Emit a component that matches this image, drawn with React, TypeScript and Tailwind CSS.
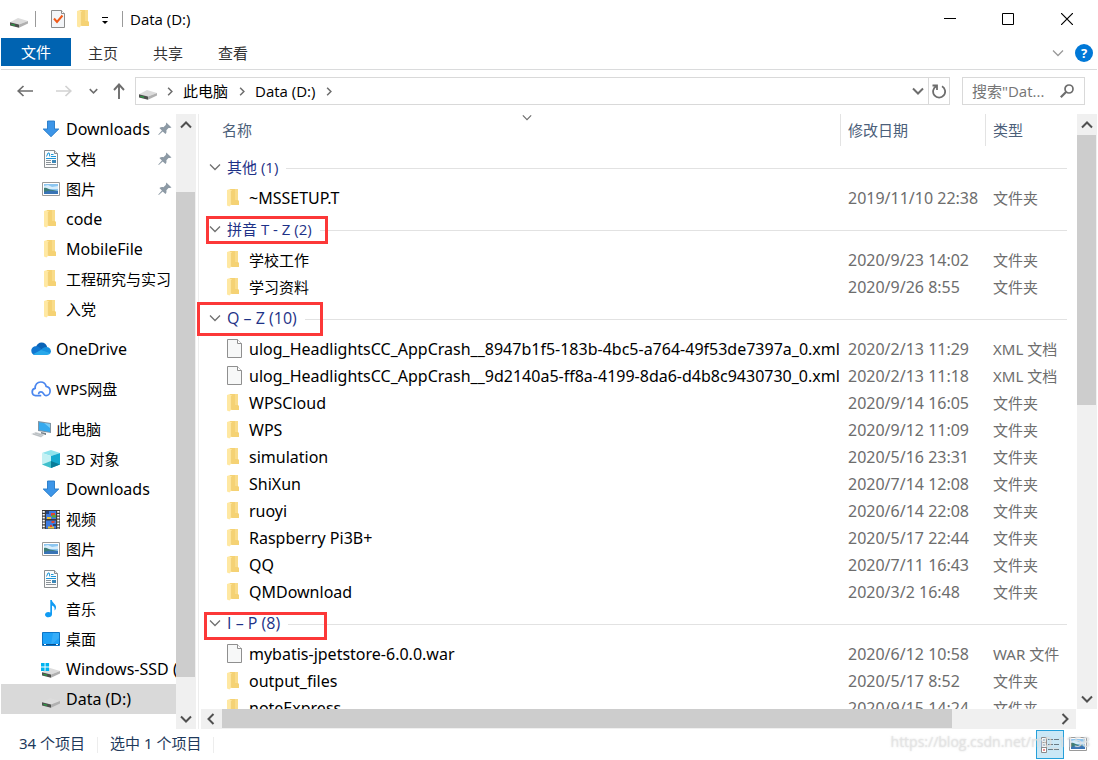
import React from "react";

type IconProps = { className?: string };

function Folder({ className = "" }: IconProps) {
  return (
    <svg viewBox="0 0 12 18" className={`h-[18px] w-3 shrink-0 ${className}`} aria-hidden="true">
      <path d="M3 0h8v11l1 1v4H3z" fill="#f5d274" />
      <path d="M8 0h3v11H8z" fill="#f9dc8a" />
      <path d="M0 1l3-1v.6l2 1.2V15l-2.6 2.6L0 16.5z" fill="#ffe8a2" />
      <path d="M4.4 2v13.3" stroke="#efc968" strokeWidth=".8" fill="none" />
    </svg>
  );
}

function FileIcon() {
  return (
    <svg viewBox="0 0 15 19" className="h-[19px] w-[15px] shrink-0" aria-hidden="true">
      <path d="M.5.5h10l4 4v14H.5z" fill="#f7f8f8" stroke="#8f8f8f" />
      <path d="M10.5.5v4h4" fill="#fff" stroke="#8f8f8f" />
    </svg>
  );
}

function Drive({ windows = false }: { windows?: boolean }) {
  return (
    <svg viewBox="0 0 20 18" className="h-[18px] w-5 shrink-0" aria-hidden="true">
      <path d="M1 12.200L9 8l10 3-9 3.400z" fill="#dcdcdc" />
      <path d="M1 12.200l9 2.200v3.300l-9-2.300z" fill="#4d504d" />
      <path d="M10 14.400L19 11v2.600l-9 4.100z" fill="#b0b0b0" />
      <path d="M2.500 13.900l3.500.9v1l-3.500-.9z" fill="#1fb541" />
      {windows && (
        <path d="M0 3h3.600v3.600H0zM4.500 3h3.600v3.600H4.500zM0 7.500h3.600v3.600H0zM4.500 7.500h3.600v3.600H4.500z" fill="#00b4f0" />
      )}
    </svg>
  );
}

function DownArrow() {
  return (
    <svg viewBox="0 0 18 18" className="h-[18px] w-[18px]" aria-hidden="true">
      <path d="M5.500 1h7v8h4.300L9 16.700 1.200 9h4.300z" fill="#3c95e8" stroke="#2478c6" strokeWidth=".9" />
    </svg>
  );
}

function DocIcon() {
  return (
    <svg viewBox="0 0 18 18" className="h-[18px] w-[18px]" aria-hidden="true">
      <path d="M2.500.5h10l3 3v14h-13z" fill="#fcfcfc" stroke="#8b8f92" />
      <path d="M12.500.5v3h3" fill="#e6e6e6" stroke="#8b8f92" />
      <path d="M4.500 6.500l1.500-3.500h1.200l.6 3.500M9 4.500h2.500M9 6.500h5M4 8.500h10" stroke="#1f96d8" fill="none" />
      <path d="M4 10.500h5M4 12.500h5M4 14.500h10" stroke="#8a9298" fill="none" />
      <path d="M10 10h4v3h-4z" fill="#3b87b8" />
    </svg>
  );
}

function PictureIcon() {
  return (
    <svg viewBox="0 0 18 18" className="h-[18px] w-[18px]" aria-hidden="true">
      <path d="M.5 2.500h17v13H.5z" fill="#fff" stroke="#9a9a9a" />
      <path d="M2 4h14v10H2z" fill="#8cc6f1" />
      <path d="M2 6l4-1 4 2 6-1v3H2z" fill="#d7edfb" />
      <path d="M2 8c2-1 4 .5 6 1.500l8 1.500v3H2z" fill="#3e7d77" />
      <path d="M2 12c5-2 9-1 14-1v3H2z" fill="#3873b5" />
    </svg>
  );
}

function Cube() {
  return (
    <svg viewBox="0 0 18 18" className="h-[18px] w-[18px]" aria-hidden="true">
      <path d="M9 0l9 3-9 3-9-3z" fill="#8fe3ec" />
      <path d="M0 3l9 3v12l-9-3.500z" fill="#c3f1f4" />
      <path d="M0 14.500L9 11v7z" fill="#3fbfcb" />
      <path d="M18 3L9 6v12l9-3.500z" fill="#14a9cf" />
      <path d="M9 11l9 3.500L9 18z" fill="#087c98" />
    </svg>
  );
}

function Film() {
  return (
    <svg viewBox="0 0 18 19" className="h-[19px] w-[18px]" aria-hidden="true">
      <path d="M0 0h18v19H0z" fill="#3b3b3b" />
      <path d="M1.700 1v18M16.300 1v18" stroke="#fff" strokeWidth="2.200" strokeDasharray="1.700 1.200" />
      <path d="M4 1h10v8H4zM4 10.500h10v8H4z" fill="#3d7be0" />
      <path d="M9 3h4v3H9zM9.500 11h3v2h-3z" fill="#e1452f" />
      <path d="M10 5h4v2.500h-4z" fill="#57a83a" />
      <path d="M5 7h4v2H5zM6 16.500h6v2H6z" fill="#efc12e" />
      <path d="M8 15h2v2H8z" fill="#e1452f" />
      <path d="M4 1h3v3H4zM11 14h3v2h-3z" fill="#24437e" />
    </svg>
  );
}

function Music() {
  return (
    <svg viewBox="0 0 18 18" className="h-[18px] w-[18px]" aria-hidden="true">
      <path d="M8.300 0h1.500c.3 3 4.700 4.200 4.200 7.800-.1 1.200-.8 2.200-1.500 2.800.6-2.600-.4-4.200-2.500-5v8.700c0 1.800-1.500 3-3.500 3S3 16.200 3 14.700s1.500-2.700 3.300-2.700c.8 0 1.500.2 2 .5z" fill="#109bf3" />
    </svg>
  );
}

function Desktop() {
  return (
    <svg viewBox="0 0 18 18" className="h-[18px] w-[18px]" aria-hidden="true">
      <path d="M.5 2.500h17v13H.5z" fill="#1fa2f7" stroke="#0d75c7" />
      <path d="M11 3h6v5L9 15z" fill="#46b4fa" opacity=".6" />
      <path d="M1 14.500h16" stroke="#0b4f8c" />
      <path d="M2 14.500h2M14 14.500h2" stroke="#fff" />
    </svg>
  );
}

function OneDrive() {
  return (
    <svg viewBox="0 0 20 14" className="h-[14px] w-5" aria-hidden="true">
      <path d="M5 5C6 2 8 .5 10.500.5c3 0 5 1.800 5.700 4.500L12 9z" fill="#0a63b7" />
      <path d="M4.500 13A4.300 4.300 0 0 1 .3 8.800C.3 6.400 2.300 4.300 5 4.300c1.500 0 2.700.5 3.500 1.200l5 4L7 13z" fill="#1076d0" />
      <path d="M9 8.500c2-2 4-3.700 7-3.500 2.500.2 3.900 2.200 3.900 4.200 0 1-.3 1.800-.9 2.500z" fill="#1590df" />
      <path d="M2 12.200l8-4.300 9.300 3.400c-.6 1.100-1.800 1.700-3.300 1.700H4.500c-1 0-1.900-.3-2.500-.8z" fill="#28a8ea" />
    </svg>
  );
}

function WpsCloud() {
  return (
    <svg viewBox="0 0 20 16" className="h-4 w-5" fill="none" stroke="#4a86ee" strokeWidth="1.700" strokeLinecap="round" aria-hidden="true">
      <path d="M9.500 14.700H4.600a3.700 3.700 0 0 1-.5-7.300C4 3.700 6.300 1 9.700 1c2.800 0 4.800 1.700 5.400 4.300 2.500.4 4 2.200 4 4.700s-1.800 4.700-4.100 4.700c-1.500 0-2-.9-2.500-2-.5-1-1.200-1.900-2.600-1.900-1.200 0-2 .7-2.200 1.700" />
    </svg>
  );
}

function Computer() {
  return (
    <svg viewBox="0 0 20 18" className="h-[18px] w-5" aria-hidden="true">
      <path d="M7 1l13 2v10L7 11z" fill="#8194a3" />
      <path d="M8 2.200l11 1.700v8L8 10z" fill="#35a9ee" />
      <path d="M13 3l6 .9v4z" fill="#7accf6" />
      <path d="M10 12l5 1v2l-5-.5z" fill="#77838c" />
      <path d="M0 14l5-2 9 2.500-4 3z" fill="#d3d7da" />
      <path d="M2 14l8.500 2.500M4 13l8 2.300" stroke="#a4a9ad" strokeWidth=".6" />
    </svg>
  );
}

function Pin() {
  return (
    <svg viewBox="0 0 14 14" className="h-[14px] w-[14px]" fill="#8d9aa5" aria-hidden="true">
      <path d="M8.300.5l5.200 5-1.700.6-1.300-.2-2.100 2.300c.3 1.500 0 2.900-.9 3.900L4.700 9.400.8 13l-.5-.4 3.600-4.200-2.500-2.500c1.200-.8 2.500-1 4-.7l2.400-2.200z" />
    </svg>
  );
}

function Chevron({ dir, className = "", w = 2 }: { dir: "up" | "down" | "left" | "right"; className?: string; w?: number }) {
  const paths = { up: "M1 6.500l5-5 5 5", down: "M1 1.500l5 5 5-5", left: "M6.500 1l-5 5 5 5", right: "M1.500 1l5 5-5 5" };
  const vertical = dir === "up" || dir === "down";
  return (
    <svg viewBox={vertical ? "0 0 12 8" : "0 0 8 12"} className={`shrink-0 ${className}`} fill="none" stroke="currentColor" strokeWidth={w} aria-hidden="true">
      <path d={paths[dir]} />
    </svg>
  );
}

/* Latin labels are set one step larger than Chinese ones. */
const labelSize = (text: string) => (/[\u4e00-\u9fff]/.test(text) ? "text-[15px]" : "text-[16px]");

type NavItem = { label: string; icon: React.ReactNode; root?: boolean; pinned?: boolean; gap?: boolean; selected?: boolean };

const nav: NavItem[] = [
  { label: "Downloads", icon: <DownArrow />, pinned: true },
  { label: "文档", icon: <DocIcon />, pinned: true },
  { label: "图片", icon: <PictureIcon />, pinned: true },
  { label: "code", icon: <Folder className="mr-0.5" /> },
  { label: "MobileFile", icon: <Folder className="mr-0.5" /> },
  { label: "工程研究与实习", icon: <Folder className="mr-0.5" /> },
  { label: "入党", icon: <Folder className="mr-0.5" /> },
  { label: "OneDrive", icon: <OneDrive />, root: true, gap: true },
  { label: "WPS网盘", icon: <WpsCloud />, root: true, gap: true },
  { label: "此电脑", icon: <Computer />, root: true, gap: true },
  { label: "3D 对象", icon: <Cube /> },
  { label: "Downloads", icon: <DownArrow /> },
  { label: "视频", icon: <Film /> },
  { label: "图片", icon: <PictureIcon /> },
  { label: "文档", icon: <DocIcon /> },
  { label: "音乐", icon: <Music /> },
  { label: "桌面", icon: <Desktop /> },
  { label: "Windows-SSD (C:)", icon: <Drive windows /> },
  { label: "Data (D:)", icon: <Drive />, selected: true },
];

type Row = [name: string, date: string, type: string];

const groups: { title: string; mark?: string; rows: Row[] }[] = [
  { title: "其他 (1)", rows: [["~MSSETUP.T", "2019/11/10 22:38", "文件夹"]] },
  {
    title: "拼音 T - Z (2)",
    mark: "left-[7px] top-[5px] h-7 w-[122px]",
    rows: [
      ["学校工作", "2020/9/23 14:02", "文件夹"],
      ["学习资料", "2020/9/26 8:55", "文件夹"],
    ],
  },
  {
    title: "Q – Z (10)",
    mark: "-left-0.5 top-0.5 h-[34px] w-[126px]",
    rows: [
      ["ulog_HeadlightsCC_AppCrash__8947b1f5-183b-4bc5-a764-49f53de7397a_0.xml", "2020/2/13 11:29", "XML 文档"],
      ["ulog_HeadlightsCC_AppCrash__9d2140a5-ff8a-4199-8da6-d4b8c9430730_0.xml", "2020/2/13 11:18", "XML 文档"],
      ["WPSCloud", "2020/9/14 16:05", "文件夹"],
      ["WPS", "2020/9/12 11:09", "文件夹"],
      ["simulation", "2020/5/16 23:31", "文件夹"],
      ["ShiXun", "2020/7/14 12:08", "文件夹"],
      ["ruoyi", "2020/6/14 22:08", "文件夹"],
      ["Raspberry Pi3B+", "2020/5/17 22:44", "文件夹"],
      ["QQ", "2020/7/11 16:43", "文件夹"],
      ["QMDownload", "2020/3/2 16:48", "文件夹"],
    ],
  },
  {
    title: "I – P (8)",
    mark: "left-[5px] top-[7px] h-7 w-[123px]",
    rows: [
      ["mybatis-jpetstore-6.0.0.war", "2020/6/12 10:58", "WAR 文件"],
      ["output_files", "2020/5/17 8:52", "文件夹"],
      ["noteExpress", "2020/9/15 14:24", "文件夹"],
    ],
  },
];

function VScroll({ before, thumb, after }: { before: number; thumb: number; after: number }) {
  return (
    <div className="flex w-5 shrink-0 flex-col bg-[#f0f0f0] text-[#505050]">
      <button aria-label="向上滚动" className="grid h-[21px] w-full shrink-0 place-items-center">
        <Chevron dir="up" className="h-2 w-3" />
      </button>
      <div style={{ flexGrow: before }} />
      <div className="mr-px bg-[#cdcdcd]" style={{ flexGrow: thumb }} />
      <div style={{ flexGrow: after }} />
      <button aria-label="向下滚动" className="grid h-[21px] w-full shrink-0 place-items-center">
        <Chevron dir="down" className="h-2 w-3" />
      </button>
    </div>
  );
}

export default function App() {
  return (
    <div className="flex h-screen w-full flex-col overflow-hidden bg-white px-px font-['Noto_Sans','Noto_Sans_CJK_SC',sans-serif] text-[15px] leading-5 text-black">
      <header className="shrink-0">
        <div className="flex h-[38px] items-center">
          <div className="flex flex-1 items-center pl-2">
            <Drive />
            <span className="ml-[6px] h-4 w-px bg-[#9a9a9a]" />
            <button aria-label="属性" className="ml-[15px]">
              <svg viewBox="0 0 14 18" className="h-[18px] w-[14px]" aria-hidden="true">
                <path d="M.5.5h10l3 3v14H.5z" fill="#f3f5f8" stroke="#8c8c8c" />
                <path d="M10.500.5v3h3" fill="#fff" stroke="#8c8c8c" />
                <path d="M3 8.500l3 3.500 5.500-6.500" fill="none" stroke="#f05a1a" strokeWidth="2" />
              </svg>
            </button>
            <button aria-label="新建文件夹" className="ml-3">
              <Folder />
            </button>
            <button aria-label="自定义快速访问工具栏" className="ml-3 mt-1">
              <svg viewBox="0 0 8 8" className="h-2 w-2" aria-hidden="true">
                <path d="M1 .5h6" stroke="#000" />
                <path d="M1 4h6L4 7z" />
              </svg>
            </button>
            <span className="ml-[13px] h-4 w-px bg-[#9a9a9a]" />
            <h1 className="ml-[7px] font-['Open_Sans','Noto_Sans_CJK_SC',sans-serif] text-[15px]">Data (D:)</h1>
          </div>
          <button aria-label="最小化" className="grid h-full w-[58px] place-items-center">
            <svg viewBox="0 0 12 12" className="h-3 w-3" stroke="#000"><path d="M0 5.500h12" /></svg>
          </button>
          <button aria-label="最大化" className="grid h-full w-[58px] place-items-center">
            <svg viewBox="0 0 12 12" className="h-3 w-3" fill="none" stroke="#000"><path d="M.5.5h11v11H.5z" /></svg>
          </button>
          <button aria-label="关闭" className="grid h-full w-[60px] place-items-center">
            <svg viewBox="0 0 12 12" className="h-3 w-3" stroke="#000" strokeWidth="1.200"><path d="M0 0l12 12M12 0L0 12" /></svg>
          </button>
        </div>
        <div className="flex h-8 items-start border-b border-[#dadbdc] text-[#333]">
          <button className="h-7 w-[70px] bg-[#0063b1] text-white">文件</button>
          <button className="ml-[17px] h-[30px]">主页</button>
          <button className="ml-[35px] h-[30px]">共享</button>
          <button className="ml-[35px] h-[30px]">查看</button>
          <span className="flex-1" />
          <button aria-label="展开功能区" className="mr-[11px] h-[30px] text-[#9a9a9a]">
            <Chevron dir="down" className="h-2 w-3" w={1.3} />
          </button>
          <button aria-label="帮助" className="mr-1 mt-[6px] grid h-[18px] w-[18px] place-items-center rounded-full bg-[#0078d7] text-[13px] font-bold leading-none text-white">?</button>
        </div>
        <div className="flex h-11 items-center pb-0.5 text-[#6d6d6d]">
          <button aria-label="后退" className="ml-4">
            <svg viewBox="0 0 16 12" className="h-3 w-4" fill="none" stroke="currentColor" strokeWidth="1.700"><path d="M16 6H1M6.500 1L1.200 6l5.300 5" /></svg>
          </button>
          <button aria-label="前进" className="ml-[23px] text-[#d2d2d2]">
            <svg viewBox="0 0 16 12" className="h-3 w-4" fill="none" stroke="currentColor" strokeWidth="1.700"><path d="M0 6h15M9.500 1l5.300 5-5.300 5" /></svg>
          </button>
          <button aria-label="最近浏览的位置" className="ml-[17px]">
            <Chevron dir="down" className="h-[6px] w-[9px]" w={2} />
          </button>
          <button aria-label="上移" className="ml-[15px]">
            <svg viewBox="0 0 12 16" className="h-4 w-3" fill="none" stroke="currentColor" strokeWidth="1.900"><path d="M6 16V1.500M1 7l5-5.500L11 7" /></svg>
          </button>
          <nav aria-label="地址" className="ml-[10px] flex h-7 flex-1 items-center border border-[#d9d9d9] pl-0.5 text-black">
            <Drive />
            <Chevron dir="right" className="ml-[9px] h-[9px] w-[6px] text-[#6d6d6d]" w={2} />
            <a href="#pc" className="ml-[10px]">此电脑</a>
            <Chevron dir="right" className="ml-[11px] h-[9px] w-[6px] text-[#6d6d6d]" w={2} />
            <a href="#data" className="ml-[10px] font-['Open_Sans','Noto_Sans_CJK_SC',sans-serif] text-[15px]">Data (D:)</a>
            <Chevron dir="right" className="ml-[11px] h-[9px] w-[6px] text-[#6d6d6d]" w={2} />
            <span className="flex-1" />
            <button aria-label="以前的位置" className="mr-1 text-[#6d6d6d]">
              <Chevron dir="down" className="h-2 w-3" w={2} />
            </button>
            <button aria-label="刷新" className="grid h-full w-[21px] place-items-center border-l border-[#d9d9d9] text-[#6d6d6d]">
              <svg viewBox="0 0 14 15" className="h-[15px] w-[14px]" fill="none" stroke="currentColor" strokeWidth="1.800"><path d="M4.200 2.300A6 6 0 1 0 10 2.300M.5 1.500h4.500v4.500" /></svg>
            </button>
          </nav>
          <div className="ml-3 mr-3 flex h-7 w-[123px] items-center border border-[#d9d9d9] pl-[9px]">
            <input aria-label="搜索" placeholder={'搜索"Dat...'} className="w-full min-w-0 flex-1 bg-transparent font-['Open_Sans','Noto_Sans_CJK_SC',sans-serif] outline-none placeholder:text-[#757575]" />
            <svg viewBox="0 0 14 14" className="mr-[10px] h-[14px] w-[14px] shrink-0" fill="none" stroke="currentColor" aria-hidden="true">
              <circle cx="9" cy="5" r="4" strokeWidth="1.700" />
              <path d="M6 8L.8 13.200" strokeWidth="2.200" />
            </svg>
          </div>
        </div>
      </header>

      <div className="flex min-h-0 flex-1">
        <nav aria-label="导航窗格" className="w-[175px] shrink-0 overflow-hidden">
          <ul>
            {nav.map((item, i) => (
              <li key={i} className={item.gap ? "pt-[10px]" : ""}>
                <a
                  href="#item"
                  className={`flex h-[30px] items-center whitespace-nowrap ${item.selected ? "bg-[#d9d9d9]" : ""} ${item.root ? "pl-[30px]" : "pl-10"}`}
                >
                  <span className="mr-[5px] flex w-5 shrink-0 items-center justify-center">{item.icon}</span>
                  <span className={labelSize(item.label)}>{item.label}</span>
                  {item.pinned && (
                    <span className="ml-auto mr-1">
                      <Pin />
                    </span>
                  )}
                </a>
              </li>
            ))}
          </ul>
        </nav>
        <VScroll before={57} thumb={485} after={31} />
        <div className="ml-0.5 w-px shrink-0 bg-[#ededed]" />

        <main className="flex min-w-0 flex-1 flex-col">
          <div className="flex min-h-0 flex-1">
            <div className="-ml-1 min-w-0 flex-1 overflow-hidden pl-1 pr-[10px]">
              <table className="w-full table-fixed border-collapse">
                <colgroup>
                  <col />
                  <col className="w-[145px]" />
                  <col className="w-[82px]" />
                </colgroup>
                <thead>
                  <tr className="h-[35px] text-left align-top text-[#4c607a]">
                    <th className="relative p-0 pl-[23px] font-normal">
                      <div className="h-8 leading-8">名称</div>
                      <span className="absolute inset-x-0 top-0 flex justify-center pl-[15px] text-[#6d6d6d]">
                        <Chevron dir="down" className="h-[7px] w-[10px]" w={1.4} />
                      </span>
                    </th>
                    <th className="p-0 font-normal">
                      <div className="h-8 border-l border-[#e3e3e3] pl-[7px] leading-8">修改日期</div>
                    </th>
                    <th className="p-0 font-normal">
                      <div className="h-8 border-l border-[#e3e3e3] pl-[7px] leading-8">类型</div>
                    </th>
                  </tr>
                </thead>
                {groups.map((group) => (
                  <tbody key={group.title}>
                    <tr className="h-[35px]">
                      <th colSpan={3} scope="colgroup" className="relative p-0 pl-[10px] text-left font-normal">
                        <div className="flex items-center text-[#1e3287]">
                          <Chevron dir="down" className="mr-[6px] h-2 w-3 text-[#707070]" w={1.3} />
                          <span className={`font-['Open_Sans','Noto_Sans_CJK_SC',sans-serif] ${labelSize(group.title)}`}>{group.title}</span>
                          <span className="ml-2 mt-[3px] h-px flex-1 bg-[#e2e2e2]" />
                        </div>
                        {group.mark && <span className={`absolute border-[3px] border-[#fc3838] ${group.mark}`} />}
                      </th>
                    </tr>
                    {group.rows.map(([name, date, type]) => (
                      <tr key={name} className="h-[27px] whitespace-nowrap">
                        <td className="p-0 pl-7">
                          <div className="flex items-center">
                            <span className="flex w-[22px] shrink-0 items-center">{/\.(xml|war)$/.test(name) ? <FileIcon /> : <Folder />}</span>
                            <span className={labelSize(name)}>{name}</span>
                          </div>
                        </td>
                        <td className="p-0 pl-2 text-[16px] text-[#6d6d6d]">{date}</td>
                        <td className="p-0 pl-2 text-[#6d6d6d]">{type}</td>
                      </tr>
                    ))}
                  </tbody>
                ))}
              </table>
            </div>
            <VScroll before={0} thumb={270} after={283} />
          </div>
          <div className="ml-0.5 mr-[21px] flex h-5 shrink-0 bg-[#f0f0f0] text-[#505050]">
            <button aria-label="向左滚动" className="grid w-[21px] place-items-center pr-0.5">
              <Chevron dir="left" className="h-3 w-2" />
            </button>
            <div className="mb-px bg-[#cdcdcd]" style={{ flexGrow: 730 }} />
            <div style={{ flexGrow: 103 }} />
            <button aria-label="向右滚动" className="grid w-[21px] place-items-center pr-0.5">
              <Chevron dir="right" className="h-3 w-2" />
            </button>
          </div>
        </main>
      </div>

      <footer className="relative flex h-[31px] shrink-0 items-center pl-[18px] text-[#1e395b]">
        <span className="pb-[3px]">34 个项目</span>
        <span className="mx-3 h-4 w-px bg-[#ededed]" />
        <span className="pb-[3px]">选中 1 个项目</span>
        <span className="ml-3 h-4 w-px bg-[#ededed]" />
        <span className="flex-1" />
        <button aria-label="详细信息" className="grid h-[29px] w-7 place-items-center border border-[#26a0da] bg-[#cbe8f6]">
          <svg viewBox="0 0 18 16" className="h-4 w-[18px]" fill="none" aria-hidden="true">
            <path d="M.5.5h5v15h-5zM.5 5.500h5M.5 10.500h5" fill="#fff" stroke="#8a8a8a" />
            <path d="M2.500 3h1" stroke="#2c6f8f" strokeWidth="1.500" />
            <path d="M2.500 8h1" stroke="#2c6f8f" strokeWidth="1.500" />
            <path d="M2.500 13h1" stroke="#d22" strokeWidth="2" />
            <path d="M7 2.500h5M13 2.500h5M7 7.500h5M13 7.500h5M7 12.500h5M13 12.500h5" stroke="#6a7a83" />
          </svg>
        </button>
        <button aria-label="大图标" className="ml-[5px] mr-[10px] pb-px">
          <PictureIcon />
        </button>
        <span className="pointer-events-none absolute right-[7px] top-[3px] font-['Open_Sans',sans-serif] text-[14px] text-[#e3e3e3]/80 [text-shadow:0_0_2px_rgba(190,190,190,0.6)]">https://blog.csdn.net/m0_1158</span>
      </footer>
    </div>
  );
}
